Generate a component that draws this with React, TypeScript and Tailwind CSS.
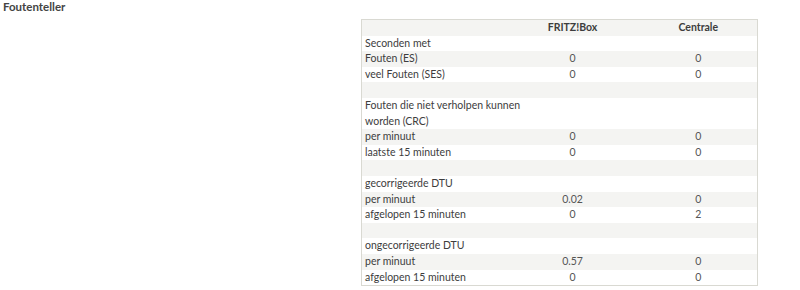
import React from "react";

type Row = { label: React.ReactNode; a?: string; b?: string };

const rows: Row[] = [
  { label: "Seconden met" },
  { label: "Fouten (ES)", a: "0", b: "0" },
  { label: "veel Fouten (SES)", a: "0", b: "0" },
  { label: "" },
  {
    label: (
      <>
        Fouten die niet verholpen kunnen
        <br />
        worden (CRC)
      </>
    ),
  },
  { label: "per minuut", a: "0", b: "0" },
  { label: "laatste 15 minuten", a: "0", b: "0" },
  { label: "" },
  { label: "gecorrigeerde DTU" },
  { label: "per minuut", a: "0.02", b: "0" },
  { label: "afgelopen 15 minuten", a: "0", b: "2" },
  { label: "" },
  { label: "ongecorrigeerde DTU" },
  { label: "per minuut", a: "0.57", b: "0" },
  { label: "afgelopen 15 minuten", a: "0", b: "0" },
];

export default function App() {
  return (
    <div className="w-[800px] h-[290px] bg-white text-[#3d3d3d] font-['Lato',sans-serif]">
      <div className="pl-[3px] pt-px text-[11.5px] font-bold leading-[12px] text-[#444]">Foutenteller</div>
      <div className="ml-[361px] mt-[6px] w-[397px]">
        <table className="w-full table-fixed border border-[#d9d9d2] border-collapse">
          <colgroup>
            <col className="w-[144px]" />
            <col className="w-[134px]" />
            <col />
          </colgroup>
          <thead>
            <tr className="bg-[#f4f4f2]">
              <th className="p-0 h-[16px] text-[10.5px] leading-[15.6px] font-bold"></th>
              <th className="p-0 text-center text-[10.5px] leading-[15.6px] font-bold">FRITZ!Box</th>
              <th className="p-0 text-center text-[10.5px] leading-[15.6px] font-bold">Centrale</th>
            </tr>
          </thead>
          <tbody>
            {rows.map((r, i) => (
              <tr key={i} className={i % 2 === 1 ? "bg-[#f4f4f2]" : "bg-white"}>
                <td className="p-0 pl-[3px] pr-0 text-left align-top h-[15.6px] whitespace-nowrap text-[10.5px] leading-[15.6px]">{r.label}</td>
                <td className="p-0 text-center align-top text-[10.5px] leading-[15.6px] text-[#555]">{r.a ?? ""}</td>
                <td className="p-0 text-center align-top text-[10.5px] leading-[15.6px] text-[#555]">{r.b ?? ""}</td>
              </tr>
            ))}
          </tbody>
        </table>
      </div>
    </div>
  );
}
